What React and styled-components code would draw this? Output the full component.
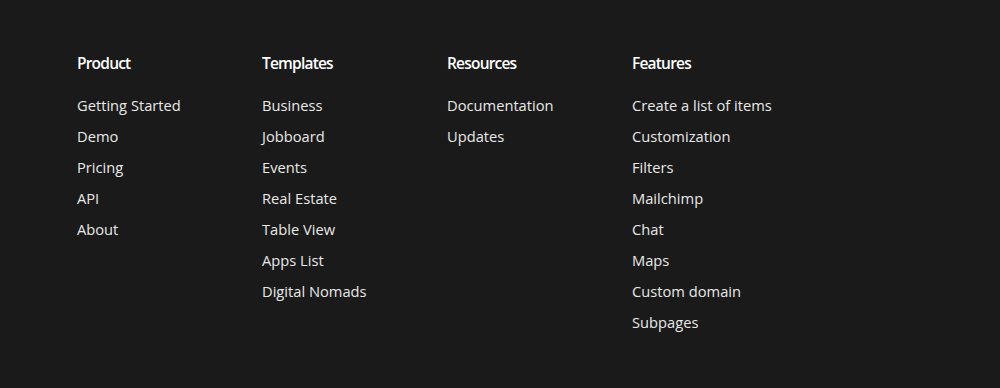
import React from "react";
import styled, { createGlobalStyle } from "styled-components";

const Global = createGlobalStyle`
  html, body { margin: 0; padding: 0; background: #1a1a1a; }
  body { font-family: "Open Sans", "Liberation Sans", sans-serif; }
`;

const Footer = styled.footer`
  box-sizing: border-box;
  height: 388px;
  background: #1a1a1a;
  padding: 52px 0 0 77px;
  display: grid;
  grid-template-columns: repeat(4, 185px);
  align-items: start;
`;

const Column = styled.div`
  display: flex;
  flex-direction: column;
`;

const Heading = styled.h3`
  margin: 0 0 16px;
  font-family: "Open Sans", sans-serif;
  font-weight: 600;
  font-size: 15.5px;
  line-height: 22px;
  letter-spacing: -0.8px;
  color: #ffffff;
`;

const List = styled.ul`
  list-style: none;
  margin: 0;
  padding: 0;
  display: flex;
  flex-direction: column;
`;

const Link = styled.a`
  display: block;
  font-size: 14.7px;
  line-height: 31px;
  color: #e8e8e8;
  text-decoration: none;
`;

const columns = [
  { title: "Product", items: ["Getting Started", "Demo", "Pricing", "API", "About"] },
  {
    title: "Templates",
    items: ["Business", "Jobboard", "Events", "Real Estate", "Table View", "Apps List", "Digital Nomads"],
  },
  { title: "Resources", items: ["Documentation", "Updates"] },
  {
    title: "Features",
    items: [
      "Create a list of items",
      "Customization",
      "Filters",
      "Mailchimp",
      "Chat",
      "Maps",
      "Custom domain",
      "Subpages",
    ],
  },
];

export default function App() {
  return (
    <>
      <Global />
      <Footer>
        {columns.map((c) => (
          <Column key={c.title}>
            <Heading>{c.title}</Heading>
            <List>
              {c.items.map((i) => (
                <li key={i}>
                  <Link href="#">{i}</Link>
                </li>
              ))}
            </List>
          </Column>
        ))}
      </Footer>
    </>
  );
}
